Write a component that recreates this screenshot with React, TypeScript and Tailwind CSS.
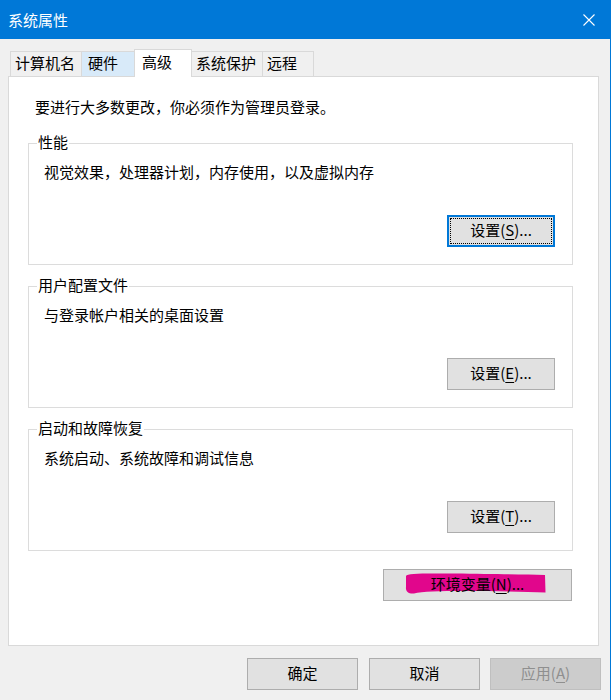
import React from "react";

function Btn({
  children,
  className = "",
  focused = false,
  disabled = false,
}: {
  children: React.ReactNode;
  className?: string;
  focused?: boolean;
  disabled?: boolean;
}) {
  if (focused) {
    return (
      <div
        className={`relative flex items-center justify-center pb-[2px] bg-[#e1e1e1] border-2 border-[#0078d7] ${className}`}
      >
        <span className="absolute inset-[1px] border border-dotted border-black" />
        <span className="relative">{children}</span>
      </div>
    );
  }
  return (
    <div
      className={`relative flex items-center justify-center pb-[2px] border ${
        disabled
          ? "bg-[#cccccc] border-[#bfbfbf] text-[#8f8f8f]"
          : "bg-[#e1e1e1] border-[#adadad]"
      } ${className}`}
    >
      {children}
    </div>
  );
}

function U({ children }: { children: React.ReactNode }) {
  return <span className="underline underline-offset-[3px] decoration-1">{children}</span>;
}

function Group({
  label,
  desc,
  btn,
  focused = false,
  className = "",
}: {
  label: string;
  desc: string;
  btn: React.ReactNode;
  focused?: boolean;
  className?: string;
}) {
  return (
    <div
      className={`relative ml-[19px] w-[545px] h-[122px] border border-[#dcdcdc] pt-[18px] pl-[15px] pr-[17px] ${className}`}
    >
      <span className="absolute -top-[12px] left-[8px] px-[1px] bg-white leading-[20px]">
        {label}
      </span>
      <div className="leading-[20px]">{desc}</div>
      <div className="flex justify-end mt-[33px]">
        <Btn focused={focused} className="w-[108px] h-[32px]">
          {btn}
        </Btn>
      </div>
    </div>
  );
}

export default function App() {
  return (
    <div className="w-[611px] h-[700px] bg-[#f0f0f0] border-r border-[#0078d7] flex flex-col text-[15px] leading-[20px] text-black font-['Noto_Sans_CJK_SC','Liberation_Sans',sans-serif]">
      {/* Title bar */}
      <div className="h-[39px] shrink-0 bg-[#0078d7] flex items-center justify-between pl-[8px] pr-[15px] pt-[1px] text-white">
        <span>系统属性</span>
        <svg width="12" height="12" viewBox="0 0 12 12" className="-mt-[1px]">
          <path d="M0.5 0.5 L11.5 11.5 M11.5 0.5 L0.5 11.5" stroke="white" strokeWidth="1.1" fill="none" />
        </svg>
      </div>

      <div className="px-[8px]">
        {/* Tabs */}
        <div className="flex items-start mt-[10px] pl-[2px] h-[28px]">
          <div className="mt-[2px] h-[25px] w-[72px] border border-b-0 border-[#d9d9d9] bg-[#f0f0f0] flex items-center pl-[4px] pb-[3px]">
            计算机名
          </div>
          <div className="mt-[2px] h-[25px] w-[55px] -ml-px border border-b-0 border-[#d9d9d9] bg-[#d8eaf9] flex items-center pl-[6px] pb-[3px]">
            硬件
          </div>
          <div className="relative z-10 h-[28px] w-[58px] -ml-[2px] border border-b-0 border-[#d9d9d9] bg-white flex items-center pl-[7px] pb-[4px]">
            高级
          </div>
          <div className="mt-[2px] h-[25px] w-[72px] -ml-px border border-b-0 border-[#d9d9d9] bg-[#f0f0f0] flex items-center pl-[4px] pb-[3px]">
            系统保护
          </div>
          <div className="mt-[2px] h-[25px] w-[52px] -ml-px border border-b-0 border-[#d9d9d9] bg-[#f0f0f0] flex items-center pl-[4px] pb-[3px]">
            远程
          </div>
        </div>

        {/* Panel */}
        <div className="-mt-px w-[591px] h-[570px] bg-white border border-[#d9d9d9] flex flex-col">
          <div className="pt-[20px] pl-[26px] leading-[20px]">
            要进行大多数更改，你必须作为管理员登录。
          </div>

          <Group
            className="mt-[26px]"
            label="性能"
            desc="视觉效果，处理器计划，内存使用，以及虚拟内存"
            focused
            btn={
              <>
                设置(<U>S</U>)...
              </>
            }
          />
          <Group
            className="mt-[21px]"
            label="用户配置文件"
            desc="与登录帐户相关的桌面设置"
            btn={
              <>
                设置(<U>E</U>)...
              </>
            }
          />
          <Group
            className="mt-[21px]"
            label="启动和故障恢复"
            desc="系统启动、系统故障和调试信息"
            btn={
              <>
                设置(<U>T</U>)...
              </>
            }
          />

          <div className="flex justify-end mt-[18px] pr-[26px]">
            <Btn className="w-[189px] h-[32px]">
              <svg
                className="absolute left-0 top-0"
                width="189"
                height="32"
                viewBox="0 0 189 32"
              >
                <path
                  d="M22 6 C 23 3, 40 3.5, 70 3.5 C 110 4, 140 4.5, 161 5 L 161.5 22.5 C 140 21.5, 110 21, 80 21 C 55 21, 38 21.5, 30 23.5 C 24 24, 21.5 21, 22 17 Z"
                  fill="#e1068c"
                />
              </svg>
              <span className="relative">
                环境变量(<U>N</U>)...
              </span>
            </Btn>
          </div>
        </div>

        {/* Bottom buttons */}
        <div className="flex justify-end mt-[12px] pr-[1px]">
          <Btn className="w-[111px] h-[32px] mr-[11px]">确定</Btn>
          <Btn className="w-[111px] h-[32px] mr-[10px]">取消</Btn>
          <Btn disabled className="w-[111px] h-[32px]">
            应用(<U>A</U>)
          </Btn>
        </div>
      </div>
    </div>
  );
}
